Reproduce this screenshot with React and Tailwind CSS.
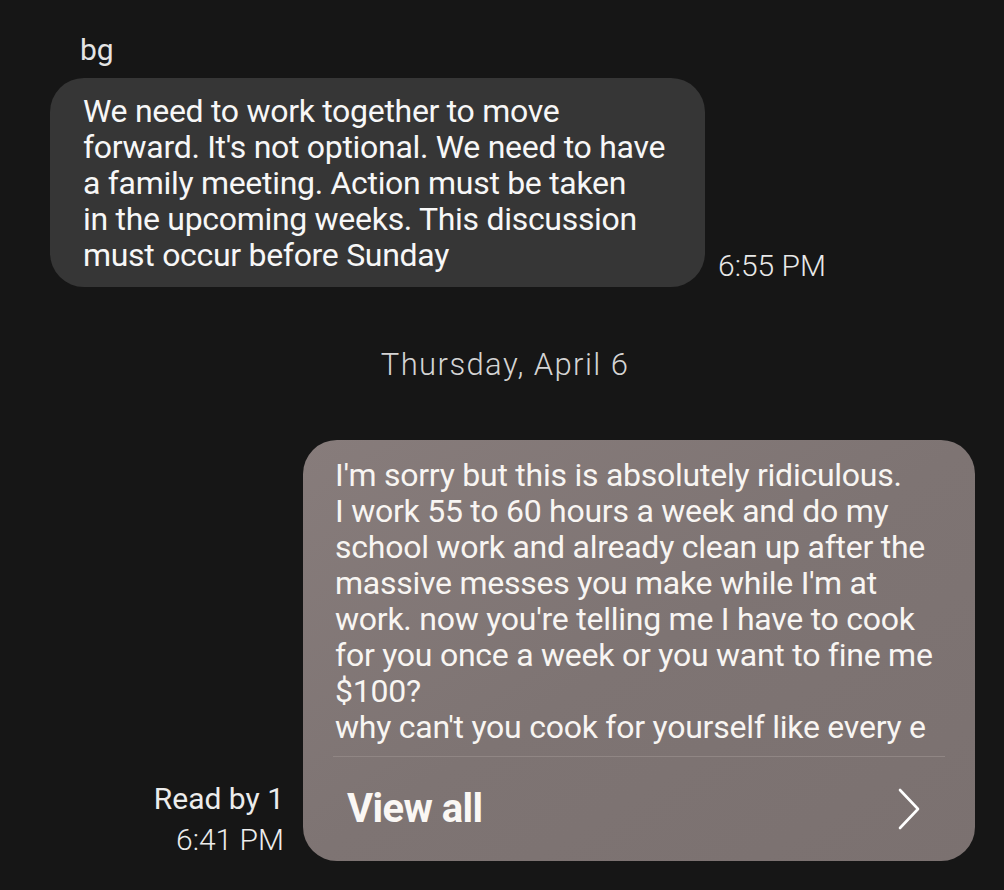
import React from "react";

const leftLines = [
  "We need to work together to move",
  "forward. It's not optional. We need to have",
  "a family meeting. Action must be taken",
  "in the upcoming weeks. This discussion",
  "must occur before Sunday",
];

const rightLines = [
  "I'm sorry but this is absolutely ridiculous.",
  "I work 55 to 60 hours a week and do my",
  "school work and already clean up after the",
  "massive messes you make while I'm at",
  "work. now you're telling me I have to cook",
  "for you once a week or you want to fine me",
  "$100?",
  "why can't you cook for yourself like every e",
];

export default function App() {
  return (
    <div
      className="w-[1004px] h-[890px] bg-[#161616] overflow-hidden text-white"
      style={{ fontFamily: "Roboto, 'Liberation Sans', sans-serif" }}
    >
      <div className="pl-[80px] pt-[33px] text-[30px] leading-[33px] text-[#e4e4e4]">bg</div>

      <div className="flex items-end pl-[50px] mt-[12px]">
        <div className="w-[655px] h-[209px] rounded-[34px] bg-[#363636] pl-[33px] pt-[15px] text-[32px] leading-[36px] text-[#f7f7f7] tracking-[-0.3px]">
          {leftLines.map((l, i) => (
            <div key={i} className="whitespace-nowrap">{l}</div>
          ))}
        </div>
        <div className="ml-[13px] mb-[4px] text-[30px] leading-[34px] text-[#e8e8e8] font-light">6:55 PM</div>
      </div>

      <div className="mt-[60px] pl-[6px] text-center text-[31px] leading-[36px] text-[#d4d4d4] font-light tracking-[1.4px]">
        Thursday, April 6
      </div>

      <div className="flex items-end justify-end pr-[29px] mt-[57px]">
        <div className="flex flex-col items-end mr-[19px] mb-[1px] text-[30px] leading-[41px] text-[#ececec]">
          <div>Read by 1</div>
          <div className="font-light">6:41 PM</div>
        </div>
        <div className="w-[672px] h-[421px] rounded-[34px] bg-gradient-to-br from-[#877c7b] via-[#7e7473] to-[#7b7170] flex flex-col">
          <div className="pl-[32px] pt-[17px] text-[32px] leading-[36px] text-[#f8f5f2] tracking-[-0.25px]">
            {rightLines.map((l, i) => (
              <div key={i} className="whitespace-nowrap">{l}</div>
            ))}
          </div>
          <div className="mx-[30px] mt-[11px] h-px bg-[#908684]" />
          <div className="flex-1 flex items-center justify-between pl-[44px] pr-[54px]">
            <span className="text-[40px] font-bold text-[#faf7f4] tracking-[-0.6px]">View all</span>
            <svg width="24" height="42" viewBox="0 0 24 42" fill="none">
              <polyline points="3,2 21,21 3,40" stroke="#ffffff" strokeWidth="2.6" strokeLinecap="round" strokeLinejoin="round" />
            </svg>
          </div>
        </div>
      </div>
    </div>
  );
}
